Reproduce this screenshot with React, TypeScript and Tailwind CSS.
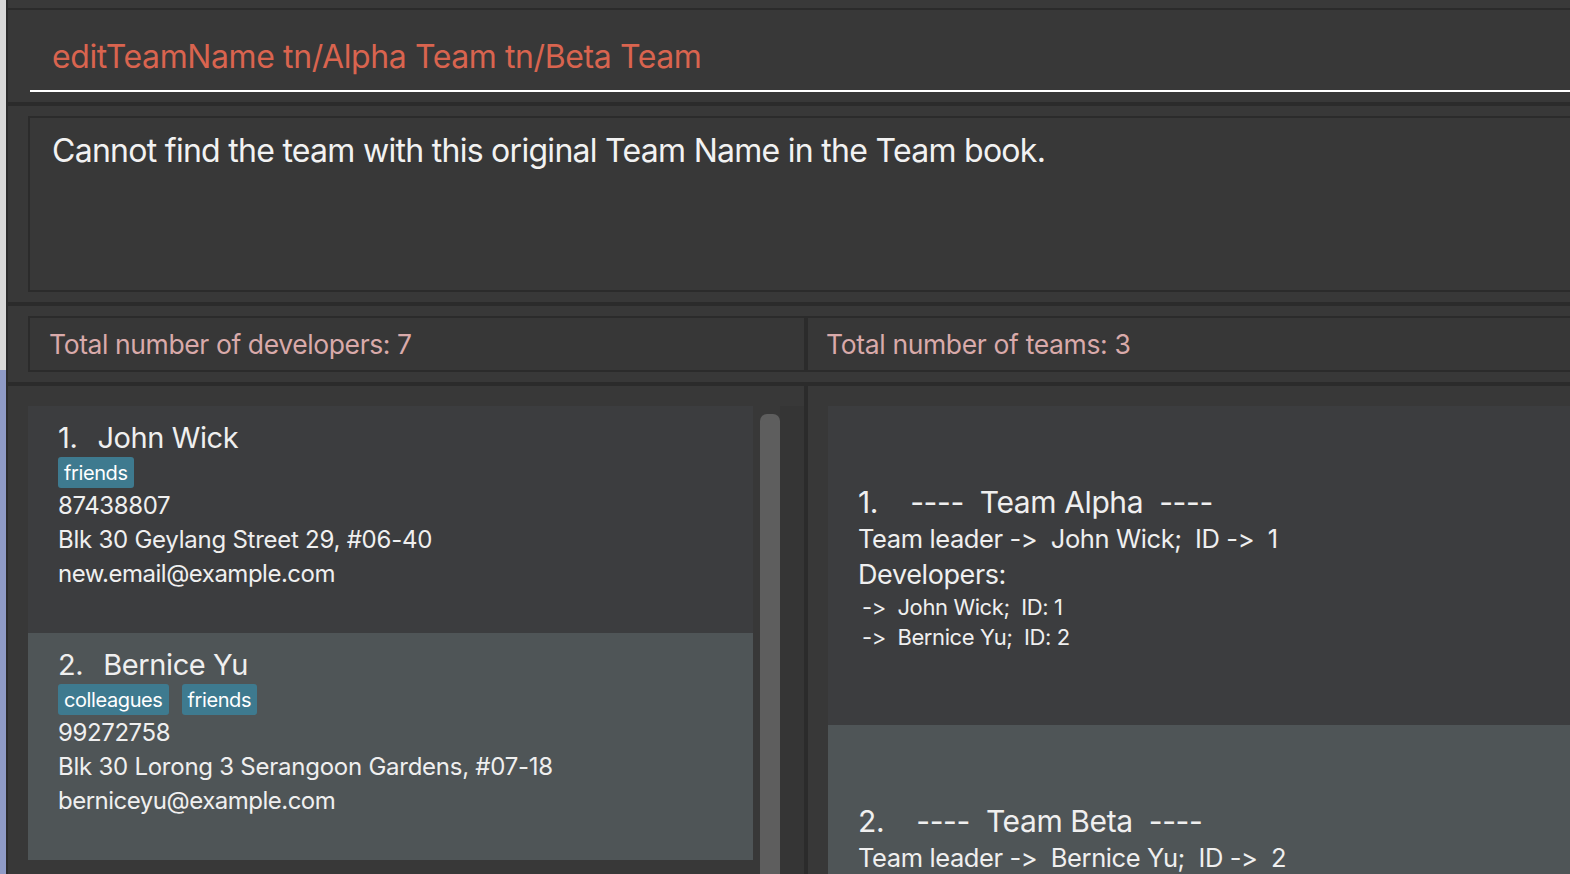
import React from "react";

const font = { fontFamily: "Inter, 'Noto Sans', sans-serif" };

function Tag({ children }: { children: React.ReactNode }) {
  return (
    <span className="inline-flex h-[31px] items-center rounded-[3px] bg-[#3e7a8f] px-[6px] text-[20px] leading-none tracking-[-0.4px] text-white">
      {children}
    </span>
  );
}

function PersonCard({
  idx,
  name,
  tags,
  phone,
  address,
  email,
  light,
}: {
  idx: number;
  name: string;
  tags: string[];
  phone: string;
  address: string;
  email: string;
  light?: boolean;
}) {
  return (
    <div
      className={`flex h-[227px] w-[725px] shrink-0 flex-col pl-[30px] pt-[15px] text-[#efefef] ${
        light ? "bg-[#4f5557]" : "bg-[#3c3d3f]"
      }`}
    >
      <div className="flex h-[34px] text-[29px] leading-[34px] tracking-[-0.4px]">
        <span>{idx}.</span>
        <span className="ml-[20px]">{name}</span>
      </div>
      <div className="mt-[2px] flex gap-[13px]">
        {tags.map((t) => (
          <Tag key={t}>{t}</Tag>
        ))}
      </div>
      <div className="mt-[1px] text-[24px] leading-[34px] tracking-[-0.4px]">{phone}</div>
      <div className="text-[24px] leading-[34px] tracking-[-0.25px]">{address}</div>
      <div className="text-[24px] leading-[34px] tracking-[-0.5px]">{email}</div>
    </div>
  );
}

function TeamCard({
  idx,
  name,
  leader,
  leaderId,
  devs,
  light,
}: {
  idx: number;
  name: string;
  leader: string;
  leaderId: number;
  devs: { name: string; id: number }[];
  light?: boolean;
}) {
  return (
    <div
      className={`flex h-[319px] w-full shrink-0 flex-col justify-center pl-[30px] pt-[4px] text-[#efefef] ${
        light ? "bg-[#4f5557]" : "bg-[#3c3d3f]"
      }`}
    >
      <div className="whitespace-pre text-[30px] leading-[38px] tracking-[-0.4px]">
        {`${idx}.    ----  ${name}  ----`}
      </div>
      <div className="whitespace-pre text-[25.5px] leading-[36px] tracking-[-0.4px]">
        {`Team leader ->  ${leader};  ID ->  ${leaderId}`}
      </div>
      <div className="text-[27px] leading-[35px] tracking-[-0.4px]">Developers:</div>
      {devs.map((d) => (
        <div key={d.id} className="whitespace-pre pl-[4px] text-[22px] leading-[30px] tracking-[-0.4px]">
          {`->  ${d.name};  ID: ${d.id}`}
        </div>
      ))}
    </div>
  );
}

export default function App() {
  return (
    <div style={font} className="flex h-[874px] w-[1570px] overflow-hidden bg-[#383838]">
      {/* left window edge */}
      <div className="flex w-[6px] flex-col">
        <div className="h-[370px] bg-[#d9d9d9]" />
        <div className="flex-1 bg-[#8f9bc7]" />
      </div>
      <div className="w-[2px] bg-[#2b2b2b]" />

      <div className="flex min-w-0 flex-1 flex-col">
        {/* top strip */}
        <div className="h-[8px] bg-[#393939]" />
        <div className="h-[2px] bg-[#2b2b2b]" />

        {/* command box */}
        <div className="flex h-[92px] flex-col justify-end pl-[22px]">
          <div className="flex h-[62px] items-center border-b-2 border-white pb-[6px] pl-[22px] text-[32px] tracking-[-0.4px] text-[#d9644f]">
            editTeamName tn/Alpha Team tn/Beta Team
          </div>
          <div className="h-[10px]" />
        </div>
        <div className="h-[4px] bg-[#2b2b2b]" />

        {/* result display */}
        <div className="flex h-[196px] flex-col pl-[20px] pt-[10px] pb-[10px]">
          <div className="flex-1 border-2 border-r-0 border-[#2b2b2b] pl-[22px] pt-[13px] text-[32px] leading-[40px] tracking-[-0.72px] text-[#f2f2f2]">
            Cannot find the team with this original Team Name in the Team book.
          </div>
        </div>
        <div className="h-[4px] bg-[#2b2b2b]" />

        {/* stats row */}
        <div className="flex h-[76px] flex-col pl-[20px] pt-[10px] pb-[10px]">
          <div className="flex flex-1 border-2 border-r-0 border-[#2b2b2b] bg-[#373737]">
            <div className="flex w-[774px] items-center pl-[19px] pt-[2px] text-[26.5px] tracking-[-0.4px] text-[#d9aaaa]">
              Total number of developers: 7
            </div>
            <div className="w-[4px] bg-[#2b2b2b]" />
            <div className="flex flex-1 items-center pl-[18px] pt-[2px] text-[26.5px] tracking-[-0.35px] text-[#d9aaaa]">
              Total number of teams: 3
            </div>
          </div>
        </div>
        <div className="h-[4px] bg-[#2b2b2b]" />

        {/* lists */}
        <div className="flex min-h-0 flex-1">
          <div className="flex w-[796px] pl-[20px] pt-[20px]">
            <div className="flex flex-col">
              <PersonCard
                idx={1}
                name="John Wick"
                tags={["friends"]}
                phone="87438807"
                address="Blk 30 Geylang Street 29, #06-40"
                email="new.email@example.com"
              />
              <PersonCard
                idx={2}
                name="Bernice Yu"
                tags={["colleagues", "friends"]}
                phone="99272758"
                address="Blk 30 Lorong 3 Serangoon Gardens, #07-18"
                email="berniceyu@example.com"
                light
              />
            </div>
            <div className="ml-[7px] mt-[8px] w-[20px] rounded-t-[7px] bg-[#5e5e5e]" />
            <div className="flex-1 bg-[#353535]" />
          </div>
          <div className="w-[4px] bg-[#2b2b2b]" />
          <div className="flex min-w-0 flex-1 flex-col pl-[20px] pt-[20px]">
            <TeamCard
              idx={1}
              name="Team Alpha"
              leader="John Wick"
              leaderId={1}
              devs={[
                { name: "John Wick", id: 1 },
                { name: "Bernice Yu", id: 2 },
              ]}
            />
            <TeamCard
              idx={2}
              name="Team Beta"
              leader="Bernice Yu"
              leaderId={2}
              devs={[
                { name: "Bernice Yu", id: 2 },
                { name: "John Wick", id: 1 },
              ]}
              light
            />
          </div>
        </div>
      </div>
    </div>
  );
}
